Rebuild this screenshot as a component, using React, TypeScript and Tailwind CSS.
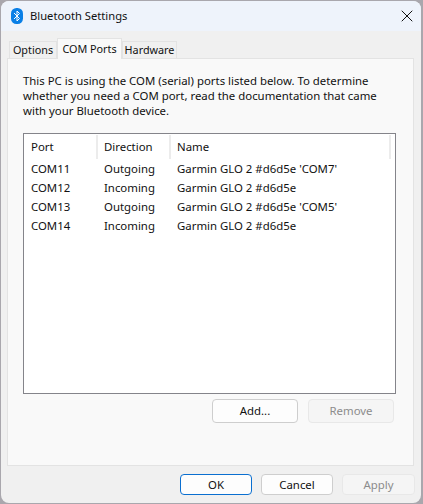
import { X } from 'lucide-react'

const ports = [
  { port: 'COM11', direction: 'Outgoing', name: "Garmin GLO 2 #d6d5e 'COM7'" },
  { port: 'COM12', direction: 'Incoming', name: 'Garmin GLO 2 #d6d5e' },
  { port: 'COM13', direction: 'Outgoing', name: "Garmin GLO 2 #d6d5e 'COM5'" },
  { port: 'COM14', direction: 'Incoming', name: 'Garmin GLO 2 #d6d5e' },
]

function BluetoothIcon() {
  return (
    <svg width="12" height="16" viewBox="0 0 12 16">
      <rect x="0" y="0" width="12" height="16" rx="5.5" fill="#0a7fe6" />
      <path d="M3 5l5.5 5.5L6 13V3l2.5 2.5L3 11" fill="none" stroke="#fff" strokeWidth="1" />
    </svg>
  )
}

export default function App() {
  return (
    <div className="h-[504px] w-[423px] bg-[#a9a7ad] pb-px pl-px pr-[2px] pt-px font-['Noto_Sans',sans-serif] text-[11.4px] text-[#111]">
      <div className="flex h-full flex-col overflow-hidden rounded-lg bg-[#f0f0f0]">
        <div className="flex h-[30px] shrink-0 items-center bg-[#eef3fb] pl-[10px] pr-[4px]">
          <BluetoothIcon />
          <span className="ml-[7px] text-[11.2px]">Bluetooth Settings</span>
          <X className="ml-auto" size={20} strokeWidth={1.2} />
        </div>

        <div className="flex h-[27px] shrink-0 items-end pl-[8px] text-[10.8px]">
          <div className="flex h-[17px] w-[48px] items-center justify-center border border-b-0 border-[#e3e3e3] pt-px">Options</div>
          <div className="z-10 mb-[-1px] flex h-[21px] w-[65px] items-center justify-center border border-b-0 border-[#e3e3e3] bg-[#f9f9f9]">COM Ports</div>
          <div className="flex h-[17px] w-[55px] items-center justify-center border border-b-0 border-[#e3e3e3] pt-px">Hardware</div>
        </div>

        <div className="ml-[6px] flex h-[408px] w-[407px] shrink-0 flex-col border border-[#e3e3e3] bg-[#f9f9f9] px-[15px] pt-[14px]">
          <p className="w-[365px] leading-[15px]">
            This PC is using the COM (serial) ports listed below. To determine whether you need a COM port, read the documentation that came with your Bluetooth device.
          </p>

          <div className="mt-[15px] h-[261px] w-[373px] border border-[#84848a] bg-white">
            <div className="mt-px flex h-[24px]">
              <div className="flex w-[74px] items-center border-r-2 border-[#ececec] pl-[7px]">Port</div>
              <div className="flex w-[73px] items-center border-r-2 border-[#ececec] pl-[6px]">Direction</div>
              <div className="flex w-[220px] items-center border-r-2 border-[#ececec] pl-[6px]">Name</div>
            </div>
            <div>
              {ports.map((row) => (
                <div key={row.port} className="flex h-[19px] items-center">
                  <div className="w-[73px] pl-[7px]">{row.port}</div>
                  <div className="w-[73px] pl-[7px]">{row.direction}</div>
                  <div className="pl-[7px]">{row.name}</div>
                </div>
              ))}
            </div>
          </div>

          <div className="mt-[5px] flex w-[371px] justify-end gap-[10px]">
            <button className="h-[24px] w-[86px] rounded border border-[#cecece] bg-[#fdfdfd]">Add...</button>
            <button className="h-[24px] w-[86px] rounded border border-[#e8e8e8] bg-[#f5f5f5] text-[#8c8c8c]">Remove</button>
          </div>
        </div>

        <div className="flex flex-1 items-start justify-end gap-[9px] pr-[6px] pt-[8px]">
          <button className="h-[21px] w-[72px] rounded border border-[#0a6fd0] bg-[#fdfdfd]">OK</button>
          <button className="h-[21px] w-[72px] rounded border border-[#cecece] bg-[#fdfdfd]">Cancel</button>
          <button className="h-[21px] w-[73px] rounded border border-[#e8e8e8] bg-[#f5f5f5] text-[#8c8c8c]">Apply</button>
        </div>
      </div>
    </div>
  )
}
